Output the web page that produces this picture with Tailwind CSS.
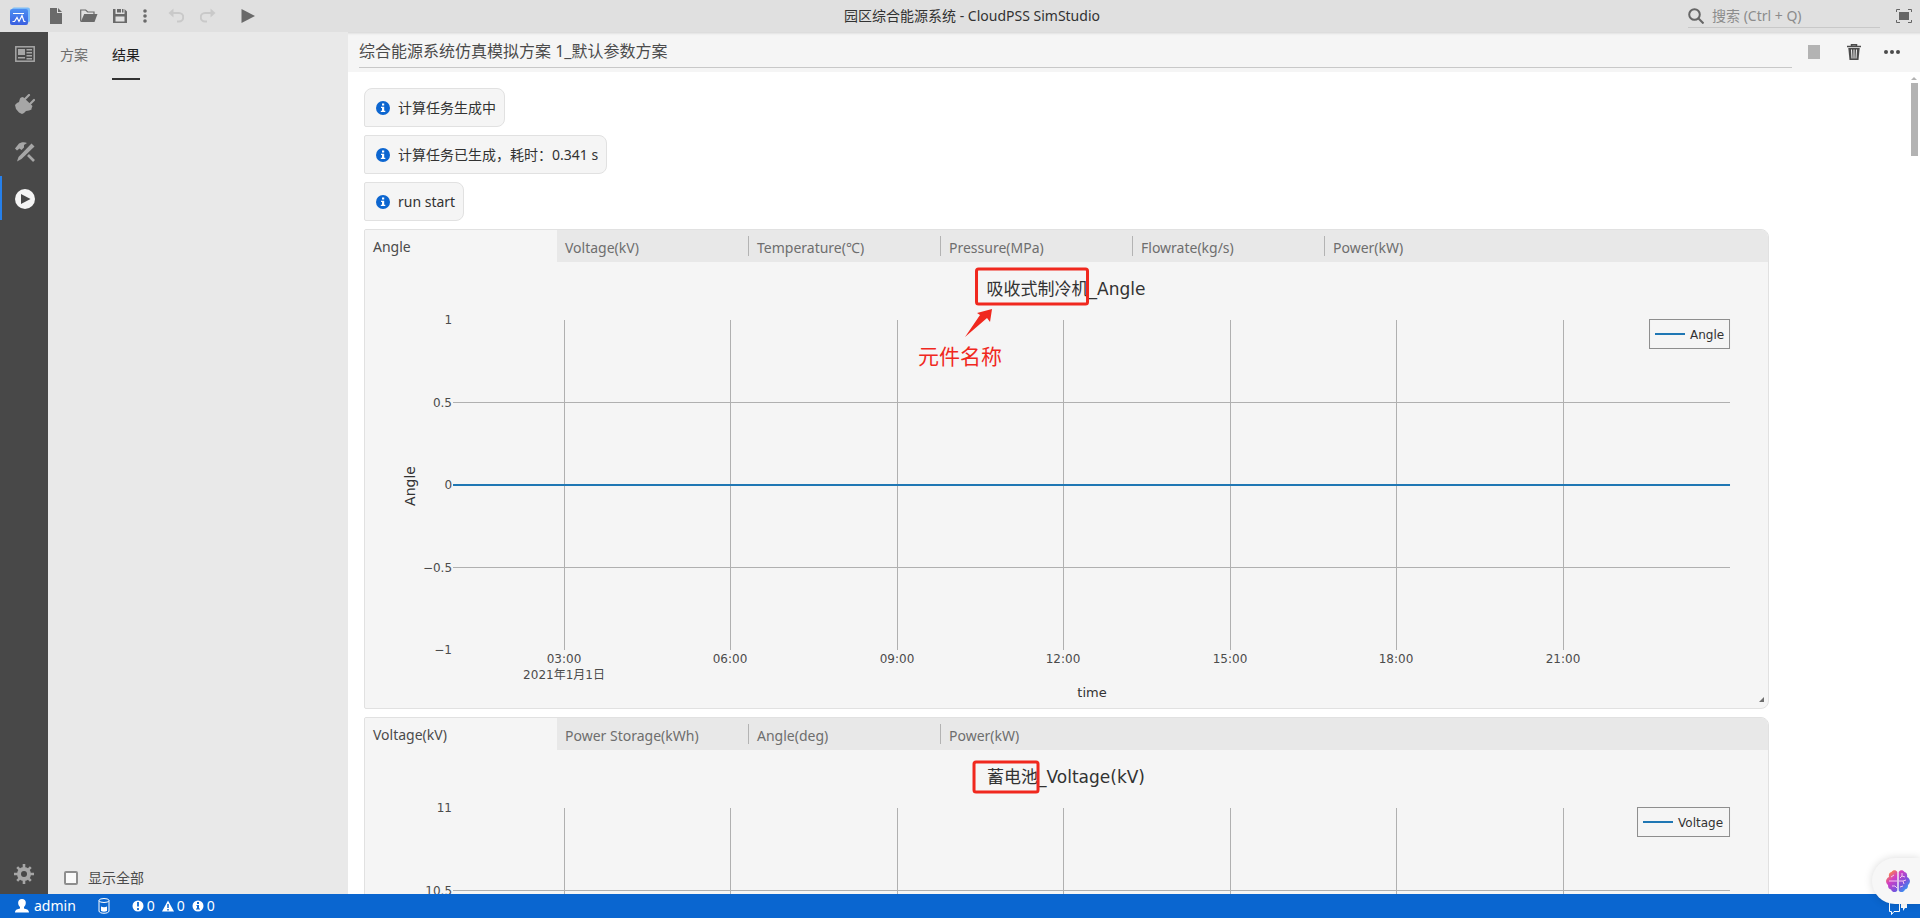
<!DOCTYPE html>
<html lang="zh-CN">
<head>
<meta charset="utf-8">
<meta name="viewport" content="width=device-width, initial-scale=1">
<title>园区综合能源系统 - CloudPSS SimStudio</title>
<script src="https://cdn.jsdelivr.net/npm/@tailwindcss/browser@4"></script>
</head>
<body class="flex h-screen flex-col overflow-hidden bg-white font-['Noto_Sans','Noto_Sans_CJK_SC',sans-serif] text-sm text-[#323232]">

<!-- Title bar -->
<header class="grid h-8 shrink-0 grid-cols-[1fr_auto_1fr] items-center bg-[#e0e0e0]">
  <div class="flex h-8 items-center pl-2 text-[#6a6a6a]">
    <svg class="h-6 w-6" viewBox="0 0 24 24" aria-label="CloudPSS">
      <defs><linearGradient id="logo" x1="0" y1="0" x2="0" y2="1"><stop offset="0" stop-color="#4d8ff2"/><stop offset="1" stop-color="#3a5fe0"/></linearGradient></defs>
      <rect x="4" y="3.500" width="18" height="15" rx="2" fill="#7cbcf8"/>
      <rect x="2" y="5" width="18" height="16" rx="2" fill="url(#logo)"/>
      <path d="M5 9.500h11M4.500 17.500h2l2.500-4 2 4 3-6 2 6h1.500" fill="none" stroke="#fff" stroke-width="1.200"/>
    </svg>
    <button type="button" aria-label="新建" class="ml-4 h-8 w-4"><svg class="h-4 w-4" viewBox="0 0 16 16" fill="currentColor"><path d="M2 0h7v5h5v11H2zM10 0l4 4h-4z"/></svg></button>
    <button type="button" aria-label="打开" class="ml-4 h-8 w-[18px]"><svg class="h-4 w-[18px]" viewBox="0 0 18 16"><path d="M.700 13.500V2h5l2 2H14v2.500" fill="none" stroke="currentColor" stroke-width="1.200"/><path d="M4.200 6H17.500l-3 8H.700z" fill="currentColor"/></svg></button>
    <button type="button" aria-label="保存" class="ml-3.5 h-8 w-4"><svg class="h-4 w-4" viewBox="0 0 16 16" fill="currentColor" fill-rule="evenodd"><path d="M1 1h2.500v5h9V1L15 3.500V15H1zM3.500 8.500v5h9v-5zM5 1h4v3.500H5zM10 1h1.500v3.500H10z"/></svg></button>
    <button type="button" aria-label="更多" class="ml-3 h-8 w-3"><svg class="h-4 w-3" viewBox="0 0 12 16" fill="currentColor"><circle cx="5" cy="3" r="1.800"/><circle cx="5" cy="8" r="1.800"/><circle cx="5" cy="13" r="1.800"/></svg></button>
    <button type="button" aria-label="撤销" class="ml-4 h-8 w-4 text-[#c9c9c9]"><svg class="h-4 w-4" viewBox="0 0 16 16"><path d="M5.500 .500v9L.500 5z" fill="currentColor"/><path d="M5 5h6a4 4 0 0 1 0 8.500H9" fill="none" stroke="currentColor" stroke-width="2"/></svg></button>
    <button type="button" aria-label="重做" class="ml-4 h-8 w-4 text-[#c9c9c9]"><svg class="h-4 w-4" viewBox="0 0 16 16"><path d="M10.500 .500v9l5-4.500z" fill="currentColor"/><path d="M11 5H5a4 4 0 0 0 0 8.500h2" fill="none" stroke="currentColor" stroke-width="2"/></svg></button>
    <button type="button" aria-label="运行" class="ml-6 h-8 w-4"><svg class="h-4 w-4" viewBox="0 0 16 16" fill="currentColor"><path d="M1.500 1L15 8 1.500 15z"/></svg></button>
  </div>
  <h1 class="pl-6 text-sm">园区综合能源系统 - CloudPSS SimStudio</h1>
  <div class="flex h-8 items-center justify-end pr-2 text-[#666]">
    <label class="mr-4 flex h-6 w-48 items-center gap-2 border-b border-[#c8c8c8]">
      <svg class="h-4 w-4 shrink-0" viewBox="0 0 16 16" fill="none" stroke="currentColor" stroke-width="2"><circle cx="6.500" cy="6.500" r="5.300"/><path d="M10.300 10.300l5.200 5.200"/></svg>
      <input type="search" aria-label="搜索" placeholder="搜索 (Ctrl + Q)" class="w-full bg-transparent text-sm outline-none placeholder:text-[#8c8c8c]">
    </label>
    <button type="button" aria-label="全屏" class="h-8 w-4"><svg class="h-4 w-4" viewBox="0 0 16 16"><path d="M.500 4V1.500H4M12 1.500h3.500V4M15.500 12v2.500H12M4 14.500H.500V12" fill="none" stroke="currentColor"/><rect x="3" y="4" width="10" height="8" fill="currentColor"/></svg></button>
  </div>
</header>

<div class="flex min-h-0 flex-1">
  <!-- Activity bar -->
  <nav class="flex w-12 shrink-0 flex-col bg-[#484848] text-[#a6a6a6]">
    <button type="button" aria-label="总览" class="flex h-12 items-center justify-center pb-1 pl-0.5"><svg class="h-5 w-5" viewBox="0 0 20 20"><rect x=".800" y="2.800" width="18.400" height="14.400" fill="none" stroke="currentColor" stroke-width="1.500"/><path d="M3 5h7v6H3zM11.500 5H17v1.500h-5.500zM11.500 8H17v1.500h-5.500zM11.500 11H17v1.500h-5.500zM3 13h7v1.500H3zM11.500 14H17v1.500h-5.500z" fill="currentColor"/></svg></button>
    <button type="button" aria-label="接口" class="flex h-12 items-center justify-center pl-0.5"><svg class="h-5 w-5" viewBox="0 0 20 20" fill="currentColor"><path d="M5 4.500l1-1L8 3l9.500 9-1 2.500v1L14 16.500l-3 .500-2 2-2 1-3-1.500-3-3.500-1-4L2 9l2-1z"/><path d="M9.500 5.500L14 1M14.500 10.500L19 6" stroke="currentColor" stroke-width="2.200" stroke-linecap="round"/></svg></button>
    <button type="button" aria-label="实现" class="flex h-12 items-center justify-center pl-0.5"><svg class="h-5 w-5" viewBox="0 0 20 20" fill="currentColor"><path d="M4 1.500C7-.200 10 0 12 1L9 3v2.500L6.500 8 4.500 6.500 2 8.500 0 6.500z"/><path d="M16.500 1.500l3 3L6.500 17 2 19.500 3.500 15z"/><path d="M13 13l6 6" stroke="currentColor" stroke-width="2.600"/></svg></button>
    <button type="button" aria-label="运行" class="flex h-11 items-center justify-center border-l-2 border-[#2680eb] pt-0.5 text-[#f5f5f5]"><svg class="h-5 w-5" viewBox="0 0 20 20"><circle cx="10" cy="10" r="10" fill="currentColor"/><path d="M6 5l9.500 5L6 15z" fill="#484848"/></svg></button>
    <button type="button" aria-label="设置" class="mt-auto flex h-10 items-center justify-center"><svg class="h-5 w-5" viewBox="0 0 20 20"><g stroke="currentColor" stroke-width="2.600"><path d="M10 0v20M0 10h20"/><path d="M3.200 3.200l13.600 13.600M3.200 16.800L16.800 3.200"/></g><circle cx="10" cy="10" r="7" fill="currentColor"/><circle cx="10" cy="10" r="3" fill="#484848"/></svg></button>
  </nav>

  <!-- Side panel -->
  <aside class="flex w-75 shrink-0 flex-col justify-between bg-[#e9e9e9]">
    <div role="tablist" class="flex gap-6 px-3">
      <button type="button" role="tab" class="h-12 border-b-2 border-transparent text-[#6e6e6e]">方案</button>
      <button type="button" role="tab" aria-selected="true" class="h-12 border-b-2 border-[#323232] text-[#1e1e1e]">结果</button>
    </div>
    <label class="flex h-8 items-center gap-2.5 pl-4 text-[#4b4b4b]">
      <input type="checkbox" class="h-3.5 w-3.5 appearance-none rounded-xs border-2 border-[#8e8e8e] bg-[#fafafa]">显示全部
    </label>
  </aside>

  <!-- Results -->
  <main class="flex min-w-0 flex-1 flex-col">
    <div class="flex h-10 shrink-0 items-center bg-[#f5f5f5] pr-5 pl-[11px] text-[#4b4b4b] shadow-[inset_0_4px_3px_-3px_#cfcfcf]">
      <input type="text" aria-label="结果名称" value="综合能源系统仿真模拟方案 1_默认参数方案" class="h-8 min-w-0 flex-1 border-b border-[#c8c8c8] pb-1 text-base outline-none">
      <button type="button" aria-label="停止" class="ml-3 flex h-8 w-5 items-center justify-center"><span class="h-3.5 w-3 bg-[#b3b3b3]"></span></button>
      <button type="button" aria-label="删除" class="ml-5 flex h-8 w-5 items-center justify-center"><svg class="h-4 w-4" viewBox="0 0 16 16"><path d="M1 2.500h14M5.500 2V.700h5V2" fill="none" stroke="currentColor" stroke-width="1.500"/><path d="M2.300 4h11.400L12.500 16h-9z" fill="currentColor"/><path d="M5.500 5.500l.500 9M8 5.500v9M10.500 5.500l-.500 9" stroke="#f5f5f5" stroke-width="1"/></svg></button>
      <button type="button" aria-label="更多操作" class="ml-5 flex h-8 w-4 items-center justify-center"><svg class="h-4 w-4" viewBox="0 0 16 16" fill="currentColor"><circle cx="2" cy="8" r="2"/><circle cx="8" cy="8" r="2"/><circle cx="14" cy="8" r="2"/></svg></button>
    </div>
    <div class="flex min-h-0 flex-1">
      <div class="flex min-w-0 flex-1 flex-col items-start gap-2 overflow-hidden pt-4 pl-4">
        <div class="flex h-[39px] shrink-0 items-center gap-2 rounded-lg rounded-bl-xs border border-[#e1e1e1] bg-[#f5f5f5] pr-2 pl-[11px]">
          <svg class="h-3.5 w-3.5" viewBox="0 0 14 14"><circle cx="7" cy="7" r="7" fill="#0d66d0"/><path d="M6 2.500h2.200v2H6zM5 5.700h3.200v4H9.300v1.300H4.800V9.700H6V7H5z" fill="#fff"/></svg><p>计算任务生成中</p>
        </div>
        <div class="flex h-[39px] shrink-0 items-center gap-2 rounded-lg rounded-l-xs border border-[#e1e1e1] bg-[#f5f5f5] pr-2 pl-[11px]">
          <svg class="h-3.5 w-3.5" viewBox="0 0 14 14"><circle cx="7" cy="7" r="7" fill="#0d66d0"/><path d="M6 2.500h2.200v2H6zM5 5.700h3.200v4H9.300v1.300H4.800V9.700H6V7H5z" fill="#fff"/></svg><p>计算任务已生成，耗时：0.341 s</p>
        </div>
        <div class="flex h-[39px] shrink-0 items-center gap-2 rounded-lg rounded-l-xs border border-[#e1e1e1] bg-[#f5f5f5] pr-2 pl-[11px]">
          <svg class="h-3.5 w-3.5" viewBox="0 0 14 14"><circle cx="7" cy="7" r="7" fill="#0d66d0"/><path d="M6 2.500h2.200v2H6zM5 5.700h3.200v4H9.300v1.300H4.800V9.700H6V7H5z" fill="#fff"/></svg><p>run start</p>
        </div>

        <!-- Angle chart -->
        <section class="w-[91%] shrink-0 overflow-hidden rounded-lg rounded-l-xs border border-[#e1e1e1] bg-[#f5f5f5]">
          <div role="tablist" class="flex h-8 items-center bg-[#e8e8e8] text-[#6e6e6e]">
            <button type="button" role="tab" aria-selected="true" class="h-8 w-48 bg-[#f5f5f5] px-2 pt-0.5 text-left text-[#4b4b4b]">Angle</button>
            <button type="button" role="tab" class="h-5 w-48 border-r border-[#b3b3b3] px-2 pt-0.5 text-left leading-5">Voltage(kV)</button>
            <button type="button" role="tab" class="h-5 w-48 border-r border-[#b3b3b3] px-2 pt-0.5 text-left leading-5">Temperature(℃)</button>
            <button type="button" role="tab" class="h-5 w-48 border-r border-[#b3b3b3] px-2 pt-0.5 text-left leading-5">Pressure(MPa)</button>
            <button type="button" role="tab" class="h-5 w-48 border-r border-[#b3b3b3] px-2 pt-0.5 text-left leading-5">Flowrate(kg/s)</button>
            <button type="button" role="tab" class="h-5 w-48 px-2 pt-0.5 text-left leading-5">Power(kW)</button>
          </div>
          <svg class="block w-full font-['DejaVu_Sans','Noto_Sans_CJK_SC',sans-serif]" viewBox="0 0 1403 446" role="img" aria-label="吸收式制冷机_Angle">
            <path d="M199.500 58V388M365.500 58V388M532.500 58V388M698.500 58V388M865.500 58V388M1031.500 58V388M1198.500 58V388M88 140.500H1365M88 305.500H1365" stroke="#b0b0b0" shape-rendering="crispEdges"/>
            <path d="M88 223H1365" stroke="#1f77b4" stroke-width="2"/>
            <text x="701" y="33" font-size="17" text-anchor="middle" fill="#323232">吸收式制冷机_Angle</text>
            <g font-size="12" fill="#4b4b4b">
              <g text-anchor="end"><text x="87" y="62">1</text><text x="87" y="145">0.5</text><text x="87" y="227">0</text><text x="87" y="310">−0.5</text><text x="87" y="392">−1</text></g>
              <g text-anchor="middle"><text x="199" y="401">03:00</text><text x="199" y="417">2021年1月1日</text><text x="365" y="401">06:00</text><text x="532" y="401">09:00</text><text x="698" y="401">12:00</text><text x="865" y="401">15:00</text><text x="1031" y="401">18:00</text><text x="1198" y="401">21:00</text></g>
            </g>
            <g font-size="13" text-anchor="middle" fill="#323232"><text x="727" y="435">time</text><text font-size="14" transform="translate(50 224) rotate(-90)">Angle</text></g>
            <rect x="1284.500" y="57.500" width="80" height="29" fill="none" stroke="#8e8e8e"/>
            <path d="M1290 72H1320" stroke="#1f77b4" stroke-width="2"/>
            <text x="1325" y="77" font-size="12" fill="#323232">Angle</text>
            <g fill="#f0281e">
              <rect x="611.500" y="7" width="111" height="35" rx="2" fill="none" stroke="#f0281e" stroke-width="3"/>
              <path d="M627 47l-2 13-3-4L600 75l15-22-3-2z"/>
              <text x="553" y="102" font-size="21">元件名称</text>
            </g>
            <path d="M1399 435v5h-5z" fill="#6e6e6e"/>
          </svg>
        </section>

        <!-- Voltage chart -->
        <section class="w-[91%] shrink-0 overflow-hidden rounded-lg rounded-l-xs border border-[#e1e1e1] bg-[#f5f5f5]">
          <div role="tablist" class="flex h-8 items-center bg-[#e8e8e8] text-[#6e6e6e]">
            <button type="button" role="tab" aria-selected="true" class="h-8 w-48 bg-[#f5f5f5] px-2 pt-0.5 text-left text-[#4b4b4b]">Voltage(kV)</button>
            <button type="button" role="tab" class="h-5 w-48 border-r border-[#b3b3b3] px-2 pt-0.5 text-left leading-5">Power Storage(kWh)</button>
            <button type="button" role="tab" class="h-5 w-48 border-r border-[#b3b3b3] px-2 pt-0.5 text-left leading-5">Angle(deg)</button>
            <button type="button" role="tab" class="h-5 w-48 px-2 pt-0.5 text-left leading-5">Power(kW)</button>
          </div>
          <svg class="block w-full font-['DejaVu_Sans','Noto_Sans_CJK_SC',sans-serif]" viewBox="0 0 1403 446" role="img" aria-label="蓄电池_Voltage(kV)">
            <path d="M199.500 58V388M365.500 58V388M532.500 58V388M698.500 58V388M865.500 58V388M1031.500 58V388M1198.500 58V388M88 140.500H1365M88 305.500H1365" stroke="#b0b0b0" shape-rendering="crispEdges"/>
            <text x="701" y="33" font-size="17" text-anchor="middle" fill="#323232">蓄电池_Voltage(kV)</text>
            <g font-size="12" fill="#4b4b4b" text-anchor="end"><text x="87" y="62">11</text><text x="87" y="145">10.5</text></g>
            <rect x="1272.500" y="57.500" width="92" height="29" fill="none" stroke="#8e8e8e"/>
            <path d="M1278 72H1308" stroke="#1f77b4" stroke-width="2"/>
            <text x="1313" y="77" font-size="12" fill="#323232">Voltage</text>
            <rect x="609" y="12" width="64" height="30" rx="2" fill="none" stroke="#f0281e" stroke-width="3"/>
          </svg>
        </section>
      </div>
      <!-- Scrollbar -->
      <div class="flex w-3 shrink-0 flex-col items-center pt-1 text-[#b3b3b3]" aria-hidden="true">
        <svg class="h-[7px] w-2" viewBox="0 0 8 7"><path d="M4 1l3 3H1z" fill="currentColor"/></svg>
        <span class="h-[73px] w-[7px] bg-[#b3b3b3]"></span>
      </div>
    </div>
  </main>
</div>

<!-- Status bar -->
<footer class="flex h-6 shrink-0 items-center bg-[#0a66d0] pr-3 pl-3.5 text-white">
  <a href="#" class="flex items-center gap-1"><svg class="h-4 w-4" viewBox="0 0 16 16" fill="currentColor"><path d="M8 1c5 0 4.500 6 2 8v1.500c2 .500 5 1 5 4H1c0-3 3-3.500 5-4V9C3.500 7 3 1 8 1z"/></svg>admin</a>
  <button type="button" aria-label="存储" class="ml-5"><svg class="h-4 w-4" viewBox="0 0 16 16" fill="none" stroke="currentColor"><ellipse cx="8" cy="2.500" rx="5" ry="2"/><path d="M3 2.500V13c0 3 10 3 10 0V2.500"/><path d="M5 8.500c2 1 4 1 6 0V13c-2 1-4 1-6 0z" fill="currentColor" stroke="none"/></svg></button>
  <button type="button" class="ml-5 flex items-center gap-[3px]">
    <svg class="h-3 w-3" viewBox="0 0 12 12"><circle cx="6" cy="6" r="5.500" fill="currentColor"/><path d="M6 2v4.500M6 8v2" stroke="#0a66d0" stroke-width="1.800"/></svg>0
    <svg class="ml-1 h-3 w-3" viewBox="0 0 12 12"><path d="M6 .500L12 11.500H0z" fill="currentColor"/><path d="M6 4v4M6 9v1.500" stroke="#0a66d0" stroke-width="1.500"/></svg>0
    <svg class="ml-1 h-3 w-3" viewBox="0 0 12 12"><circle cx="6" cy="6" r="5.500" fill="currentColor"/><path d="M5 2h2v2H5zM4.500 5H7v3.500h1v1H4v-1h1V6h-.500z" fill="#0a66d0"/></svg>0
  </button>
  <button type="button" aria-label="反馈" class="ml-auto pt-1"><svg class="h-4 w-5" viewBox="0 0 20 16"><path d="M1.500 2.500h10v9H6l-2.500 3v-3h-2z" fill="none" stroke="currentColor"/><path d="M13 4h6v4h-2l-2 3V8h-2z" fill="currentColor"/></svg></button>
</footer>

<!-- Floating assistant -->
<button type="button" aria-label="智能助手" class="fixed right-0 bottom-3.5 z-20 flex h-[46px] w-12 items-center rounded-l-full bg-[#f7f7f7] pl-3.5 shadow-[0_0_8px_#00000026]">
  <svg class="h-6 w-6" viewBox="0 0 24 24">
    <defs><linearGradient id="brain" x1="0" y1="0" x2="1" y2="1"><stop offset="0.100" stop-color="#ff8a3c"/><stop offset="0.350" stop-color="#d13fc4"/><stop offset="0.650" stop-color="#7a52dc"/><stop offset="0.900" stop-color="#2f9df4"/></linearGradient></defs>
    <path d="M11.300 3C10 .500 7 .500 5.500 3 3 3.500 2.500 6 3 8c-4 2-3.500 6-1 8 0 3 1 4 3 4.500 1.500 3.500 5 3 6.300 1zM12.700 3c1.300-2.500 4.300-2.500 5.800 0 2.500.500 3 3 2.500 5 4 2 3.500 6 1 8 0 3-1 4-3 4.500-1.500 3.500-5 3-6.300 1z" fill="url(#brain)"/>
    <path d="M5 8l3-2M3 12h8M6 17h3l2 2M16 4v3l-2 2M16 7l3 1M13 12h4l3-1M17 12l1 3M14 18l3-1" fill="none" stroke="#f3c6f0" stroke-width="1"/>
  </svg>
</button>
</body>
</html>
